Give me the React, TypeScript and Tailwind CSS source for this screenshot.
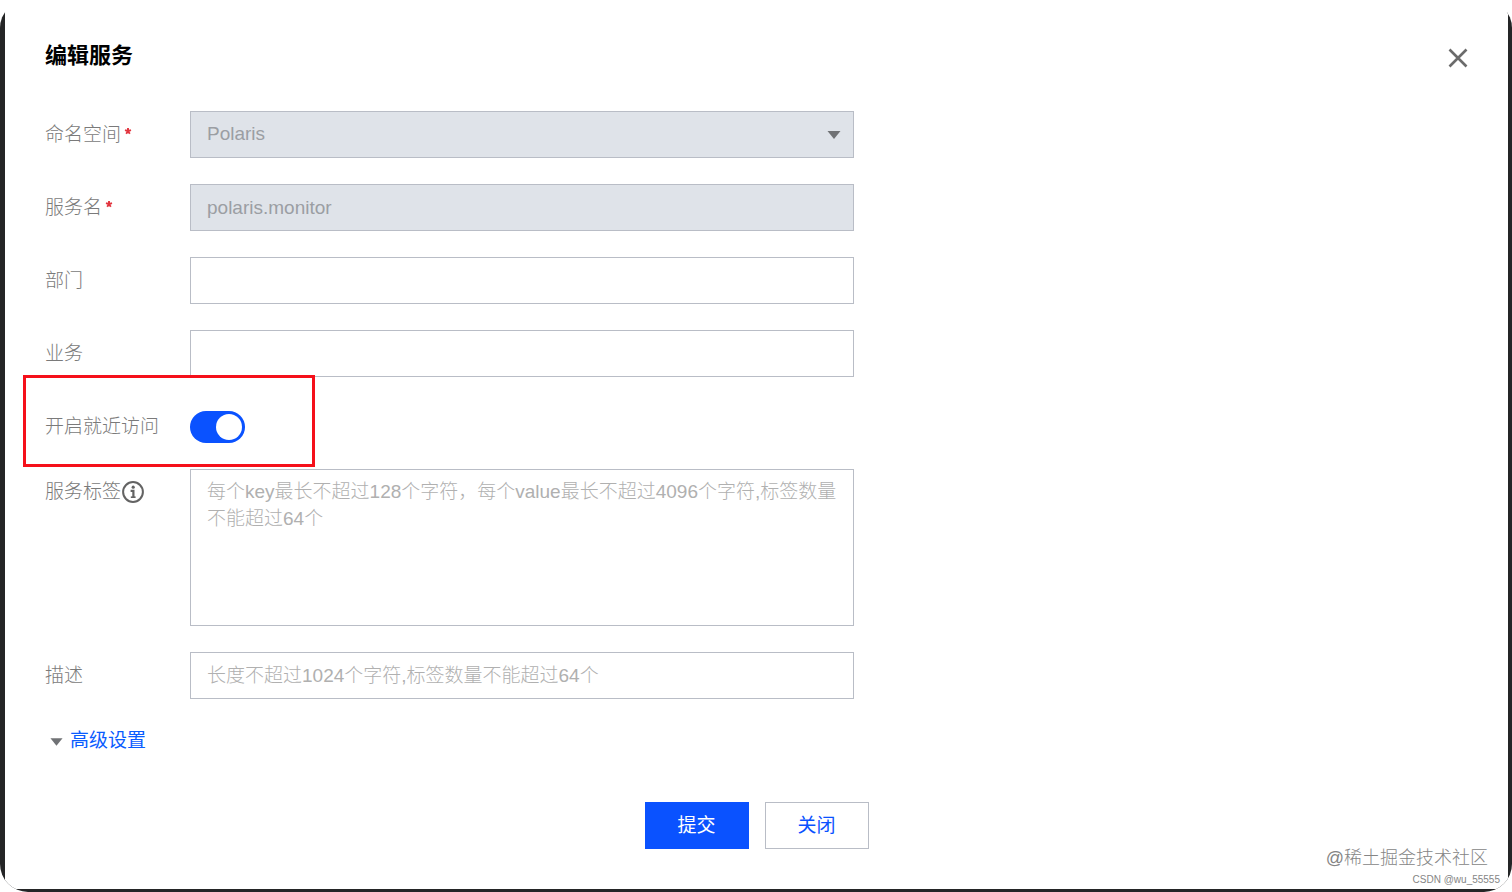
import { useState, type ReactNode } from "react";

const fieldClass =
  "block h-[47px] w-full rounded-none border border-[#b9bdc6] px-4 text-[19px] placeholder:text-[#b0b0b0] placeholder:opacity-100 focus:outline-none";
const disabledClass = "bg-[#dfe3e9] text-[#9b9ea3] opacity-100";

function Row({
  id,
  label,
  required,
  extra,
  top,
  children,
}: {
  id: string;
  label: string;
  required?: boolean;
  extra?: ReactNode;
  top?: boolean;
  children: ReactNode;
}) {
  return (
    <div className={top ? "flex items-start" : "flex items-center"}>
      <div
        className={
          top
            ? "flex w-[145px] shrink-0 items-center pt-[9px] leading-7"
            : "flex w-[145px] shrink-0 items-center leading-7"
        }
      >
        <label htmlFor={id} className="whitespace-nowrap font-light text-[#7a7a7a]">
          {label}
        </label>
        {required && (
          <svg viewBox="0 0 8 8" className="mb-2 ml-[3px] size-2" fill="none" aria-hidden="true">
            <path
              d="M4 4.2V1.1M4 4.2L1 3.2M4 4.2l3-1M4 4.2L2.2 6.8M4 4.2l1.8 2.6"
              stroke="#e2353f"
              strokeWidth="1.9"
            />
          </svg>
        )}
        {extra}
      </div>
      <div className="w-full max-w-[664px]">{children}</div>
    </div>
  );
}

function InfoIcon() {
  return (
    <svg viewBox="0 0 24 24" className="size-6" fill="none" aria-hidden="true">
      <circle cx="12" cy="12" r="9.9" stroke="#636363" strokeWidth="2" />
      <circle cx="12.2" cy="7.2" r="1.6" fill="#636363" />
      <path d="M9.6 10.9h2.8v6.2" stroke="#636363" strokeWidth="2.2" />
      <path d="M9.8 17.2h4.8" stroke="#636363" strokeWidth="1.6" />
    </svg>
  );
}

function Caret({ className }: { className: string }) {
  return (
    <svg viewBox="0 0 14 8" className={className} aria-hidden="true">
      <path d="M0.5 0h13L7 8z" fill="#707275" />
    </svg>
  );
}

export default function App() {
  const [nearby, setNearby] = useState(true);

  return (
    <div className="relative min-h-screen overflow-hidden rounded-[28px] bg-[linear-gradient(#fff_12px,#242526_12px)] pr-1 pb-[3px] pl-[5px] font-['Liberation_Sans','Noto_Sans_CJK_SC',sans-serif] text-[19px]">
      <main className="min-h-[889px] bg-white px-10 pt-8 pb-10">
        <header className="mb-8 flex h-[47px] items-end justify-between">
          <h1 className="text-[22px] leading-[47px] font-bold text-black">编辑服务</h1>
          <button type="button" aria-label="关闭窗口" className="flex h-[42px] items-center">
            <svg viewBox="0 0 20 20" className="size-5" aria-hidden="true">
              <path d="M1.5 1.5l17 17M18.5 1.5l-17 17" stroke="#6b6b6b" strokeWidth="2.6" />
            </svg>
          </button>
        </header>

        <form onSubmit={(e) => e.preventDefault()}>
          <div className="flex flex-col gap-[26px]">
            <Row id="namespace" label="命名空间" required>
              <div className="relative">
                <select
                  id="namespace"
                  disabled
                  className={`${fieldClass} ${disabledClass} appearance-none`}
                >
                  <option>Polaris</option>
                </select>
                <Caret className="pointer-events-none absolute top-5 right-[13px] h-2 w-3.5" />
              </div>
            </Row>
            <Row id="service" label="服务名" required>
              <input
                id="service"
                disabled
                defaultValue="polaris.monitor"
                className={`${fieldClass} ${disabledClass}`}
              />
            </Row>
            <Row id="department" label="部门">
              <input id="department" className={fieldClass} />
            </Row>
            <Row id="business" label="业务">
              <input id="business" className={fieldClass} />
            </Row>
            <div className="relative h-10 pt-2">
              <Row id="nearby" label="开启就近访问">
                <input
                  id="nearby"
                  type="checkbox"
                  role="switch"
                  checked={nearby}
                  onChange={(e) => setNearby(e.target.checked)}
                  className="flex h-8 w-[55px] appearance-none items-center rounded-full bg-[#b9bdc6] px-[3px] before:block before:size-[26px] before:rounded-full before:bg-white before:content-[''] checked:justify-end checked:bg-[#0a52ff]"
                />
              </Row>
              <div className="pointer-events-none absolute -top-7 -left-[22px] h-[92px] w-[292px] border-3 border-[#f5101a]" />
            </div>
            <Row id="tags" label="服务标签" top extra={<InfoIcon />}>
              <textarea
                id="tags"
                placeholder="每个key最长不超过128个字符，每个value最长不超过4096个字符,标签数量不能超过64个"
                className="block h-[157px] w-full resize-none rounded-none border border-[#b9bdc6] px-4 py-2 text-[19px] leading-[27px] font-light placeholder:text-[#b0b0b0] placeholder:opacity-100 focus:outline-none"
              />
            </Row>
            <Row id="description" label="描述">
              <input
                id="description"
                placeholder="长度不超过1024个字符,标签数量不能超过64个"
                className={`${fieldClass} font-light`}
              />
            </Row>
            <button
              type="button"
              className="flex h-8 items-center gap-[7px] self-start pl-[5px] text-[#0a5cff]"
            >
              <Caret className="mt-[2px] h-2 w-[13px]" />
              高级设置
            </button>
          </div>

          <div className="mt-[45px] flex justify-center gap-4">
            <button type="submit" className="h-[47px] w-[104px] bg-[#0a52ff] pt-[2px] text-white">
              提交
            </button>
            <button
              type="button"
              className="h-[47px] w-[104px] border border-[#b9bdc6] bg-white pt-[2px] text-[#0a52ff]"
            >
              关闭
            </button>
          </div>
        </form>
      </main>

      <div className="pointer-events-none absolute right-3 bottom-1 text-right font-light text-[#858585]">
        <p className="pr-3 text-[18px] leading-7">@稀土掘金技术社区</p>
        <p className="text-[10px] leading-4">CSDN @wu_55555</p>
      </div>
    </div>
  );
}
